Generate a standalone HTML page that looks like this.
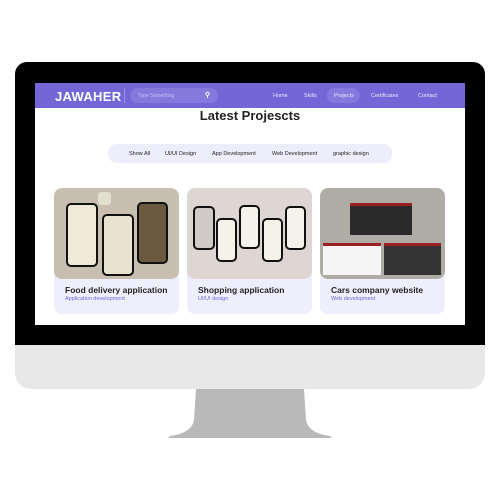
<!DOCTYPE html>
<html><head><style>
*{margin:0;padding:0;box-sizing:border-box}
body{width:500px;height:500px;background:#fff;position:relative;overflow:hidden;font-family:"Liberation Sans",sans-serif}
.bez{position:absolute;left:15px;top:62px;width:470px;height:284px;background:#000;border-radius:12px 12px 0 0}
.chin{position:absolute;left:15px;top:345px;width:470px;height:44px;background:#e8e8e8;border-radius:0 0 16px 16px}
.scr{position:absolute;left:35px;top:83px;width:430px;height:242px;background:#fff;overflow:hidden}
.nav{height:25px;background:#7466d6;position:relative;color:#fff}
.logo{position:absolute;left:20px;top:6px;font-weight:bold;font-size:13px;letter-spacing:.3px}
.sep{position:absolute;left:89px;top:5px;width:1px;height:15px;background:#9a90e4}
.search{position:absolute;left:95px;top:5px;width:88px;height:15px;border-radius:8px;background:#8579dd;font-size:5px;color:#c9c3f2;padding:5px 8px}
.search b{position:absolute;right:8px;top:3px;color:#fff;font-size:7px}
.nl{position:absolute;top:10px;font-size:5.5px;color:#ece9fb}
.pill{position:absolute;left:292px;top:5px;width:33px;height:15px;border-radius:8px;background:#8579dd}
h1{position:absolute;top:25px;width:100%;text-align:center;font-size:13px;color:#222}
.filt{position:absolute;left:73px;top:61px;width:284px;height:19px;border-radius:9px;background:#eeedfb;font-size:5.5px;color:#222}
.filt span{position:absolute;top:7px}
.card{position:absolute;top:105px;width:125px;height:126px;border-radius:8px;background:#efeefc;overflow:hidden}
.img{height:91px;border-radius:8px}
.t{position:absolute;left:11px;top:97px;font-weight:bold;font-size:8.5px;color:#222}
.s{position:absolute;left:11px;top:108px;font-size:5.5px;color:#7466d6}
.ph{position:absolute;border:2px solid #111;border-radius:5px;background:#f5f2ea}
</style></head><body>
<div class="bez"></div><div class="chin"></div>
<svg style="position:absolute;left:0;top:0" width="500" height="500"><path d="M196 389 L304 389 L306 420 Q308 433 330 436 L332 438 L168 438 L170 436 Q192 433 194 420 Z" fill="#b9b9b9"/></svg>
<div class="scr">
<div class="nav"><div class="logo">JAWAHER</div><div class="sep"></div>
<div class="search">Type Something<b>⚲</b></div>
<span class="nl" style="left:238px">Home</span><span class="nl" style="left:269px">Skills</span>
<div class="pill"></div><span class="nl" style="left:299px">Projects</span>
<span class="nl" style="left:336px">Certificates</span><span class="nl" style="left:383px">Contact</span></div>
<h1>Latest Projescts</h1>
<div class="filt"><span style="left:21px">Show All</span><span style="left:57px">UI/UI Design</span><span style="left:104px">App Development</span><span style="left:164px">Web Development</span><span style="left:225px">graphic design</span></div>
<div class="card" style="left:19px"><div class="img" style="background:#c9bfb0;position:relative">
<div class="ph" style="left:12px;top:15px;width:32px;height:64px;background:#efe9d8"></div>
<div class="ph" style="left:48px;top:26px;width:32px;height:62px;background:#e6e4d0"></div>
<div class="ph" style="left:83px;top:14px;width:31px;height:62px;background:#6b5a40"></div>
<div style="position:absolute;left:44px;top:4px;width:13px;height:13px;background:#e3e0d0;border-radius:3px"></div></div>
<div class="t">Food delivery application</div><div class="s">Application development</div></div>
<div class="card" style="left:152px"><div class="img" style="background:#ded6d2;position:relative">
<div class="ph" style="left:6px;top:18px;width:22px;height:44px;background:#cfcac5"></div>
<div class="ph" style="left:29px;top:30px;width:21px;height:44px"></div>
<div class="ph" style="left:52px;top:17px;width:21px;height:44px"></div>
<div class="ph" style="left:75px;top:30px;width:21px;height:44px"></div>
<div class="ph" style="left:98px;top:18px;width:21px;height:44px"></div></div>
<div class="t">Shopping application</div><div class="s">UI/UI design</div></div>
<div class="card" style="left:285px"><div class="img" style="background:#aeaca4;position:relative">
<div style="position:absolute;left:30px;top:15px;width:62px;height:32px;background:#2a2a2a;border-top:3px solid #9b2020"></div>
<div style="position:absolute;left:3px;top:55px;width:58px;height:32px;background:#f5f5f5;border-top:3px solid #9b2020"></div>
<div style="position:absolute;left:64px;top:55px;width:57px;height:32px;background:#333;border-top:3px solid #9b2020"></div></div>
<div class="t">Cars company website</div><div class="s">Web development</div></div>
</div>
</body></html>
